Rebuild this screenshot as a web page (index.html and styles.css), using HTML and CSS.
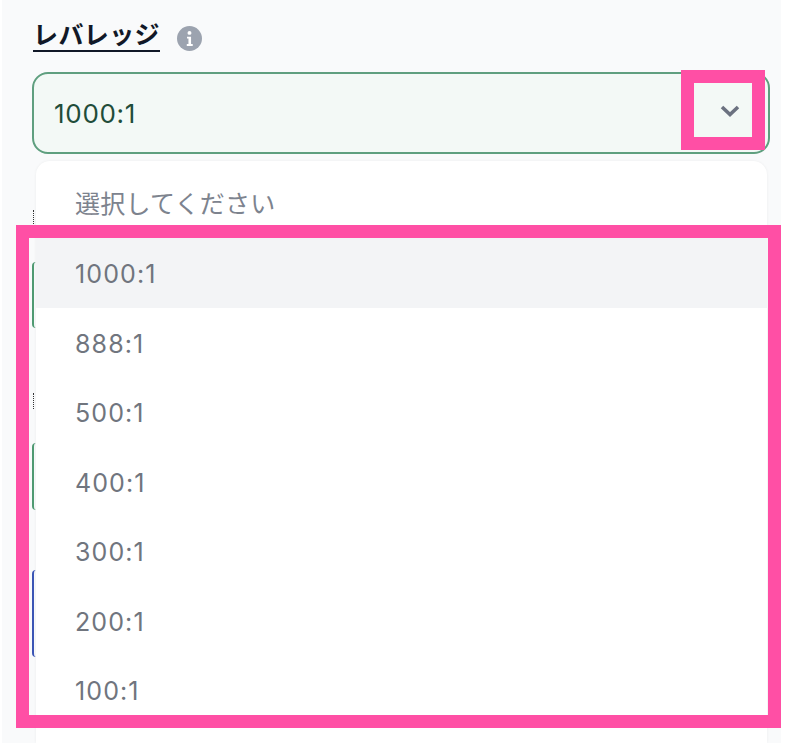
FILE: index.html
```html
<!DOCTYPE html>
<html lang="ja">
<head>
    <meta charset="UTF-8">
    <meta name="viewport" content="width=device-width, initial-scale=1.0">
    <title>レバレッジ</title>
    <link rel="stylesheet" href="styles.css">
</head>
<body>
    <div class="panel">
        <div class="label-row">
            <span class="label">レバレッジ</span>
            <svg class="info-icon" viewBox="0 0 24 24" width="25" height="25">
                <circle cx="12" cy="12" r="12" fill="#9ca3af"/>
                <circle cx="12" cy="6.6" r="1.9" fill="#fff"/>
                <path d="M9.6 10.2h3.9v7h1.6v1.9H9.4v-1.9h1.6v-5.1H9.6z" fill="#fff"/>
            </svg>
        </div>

        <div class="select">
            <span>1000:1</span>
            <svg class="chevron" viewBox="0 0 20 12" width="20" height="12">
                <path d="M2 2l8 7.5L18 2" fill="none" stroke="#6b7280" stroke-width="3.6"/>
            </svg>
        </div>

        <!-- fields behind the open menu, only their left edge shows -->
        <div class="under-dots first"></div>
        <div class="under-field green first-field"></div>
        <div class="under-dots second"></div>
        <div class="under-field green second-field"></div>
        <div class="under-field blue"></div>

        <ul class="menu">
            <li class="placeholder">選択してください</li>
            <li class="active">1000:1</li>
            <li>888:1</li>
            <li>500:1</li>
            <li>400:1</li>
            <li>300:1</li>
            <li>200:1</li>
            <li>100:1</li>
        </ul>
    </div>

    <div class="mark mark-arrow"></div>
    <div class="mark mark-list"></div>
</body>
</html>
```

FILE: styles.css
```css
* {
    margin: 0;
    padding: 0;
    box-sizing: border-box;
    font-family: Inter, 'Noto Sans CJK JP', sans-serif;
}

html, body {
    height: 100%;
    overflow: hidden;
    background-color: white;
}

.panel {
    position: relative;
    width: 779px;
    height: 743px;
    margin-left: 2px;
    padding: 20px 11px 0 30px;
    overflow: hidden;
    background-color: #f9fafb;
}

.label-row {
    display: flex;
    align-items: center;
    gap: 18px;
    height: 36px;
    margin-bottom: 16px;
}

.label {
    margin-left: 1px;
    margin-top: -3px;
    font-size: 25px;
    font-weight: 700;
    line-height: 29px;
    letter-spacing: 0.4px;
    color: #111827;
    border-bottom: 2px solid #111827;
}

.info-icon {
    margin-left: -1px;
}

.select {
    display: flex;
    align-items: center;
    justify-content: space-between;
    height: 82px;
    padding: 0 28px 0 20px;
    border: 2px solid #5f9f7f;
    border-radius: 16px;
    background-color: #f3f9f6;
    font-size: 26px;
    letter-spacing: 0.7px;
    color: #1f4d3a;
}

.chevron {
    margin-top: -4px;
}

.under-field {
    height: 66px;
    border-left: 2px solid #4f9a72;
    border-radius: 4px;
}

.under-dots {
    width: 1px;
    height: 16px;
    margin-left: 1px;
    border-left: 1px dotted #333;
}

.under-dots.first {
    margin-top: 56px;
    margin-bottom: 36px;
}

.under-dots.second {
    margin-top: 65px;
    margin-bottom: 34px;
}

.under-field.second-field {
    height: 67px;
}

.under-field.blue {
    height: 87px;
    margin-top: 60px;
    border-left-color: #3b55b5;
}

.menu {
    position: absolute;
    top: 161px;
    left: 34px;
    right: 14px;
    bottom: 0;
    padding-top: 7.5px;
    list-style: none;
    background-color: white;
    border-radius: 14px 14px 0 0;
    box-shadow: 0 0 3px rgba(0,0,0,0.06);
}

.menu li {
    height: 69.5px;
    line-height: 72px;
    padding-left: 39px;
    font-size: 25px;
    letter-spacing: 1.1px;
    color: #70757e;
}

.menu li.placeholder {
    line-height: 71px;
    letter-spacing: 0.25px;
    color: #7d838e;
}

.menu li.active {
    background-color: #f3f4f6;
}

.mark {
    position: absolute;
    border: 13px solid #ff4fa5;
}

.mark-arrow {
    top: 70px;
    left: 681px;
    width: 84px;
    height: 80px;
}

.mark-list {
    top: 225px;
    left: 16px;
    width: 765px;
    height: 503px;
}
```
